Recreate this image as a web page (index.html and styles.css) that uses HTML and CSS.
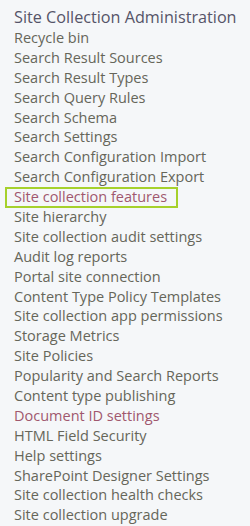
FILE: index.html
```html
<!DOCTYPE html>
<html lang="en">
<head>
    <meta charset="UTF-8">
    <title>Site Collection Administration</title>
    <link rel="stylesheet" href="styles.css">
</head>
<body>
    <div class="admin-section">
        <h3 class="section-title">Site Collection Administration</h3>
        <ul class="link-list">
            <li><a href="#">Recycle bin</a></li>
            <li><a href="#">Search Result Sources</a></li>
            <li><a href="#">Search Result Types</a></li>
            <li><a href="#">Search Query Rules</a></li>
            <li><a href="#">Search Schema</a></li>
            <li><a href="#">Search Settings</a></li>
            <li><a href="#">Search Configuration Import</a></li>
            <li><a href="#">Search Configuration Export</a></li>
            <li class="highlight"><a href="#" class="visited">Site collection features</a></li>
            <li><a href="#">Site hierarchy</a></li>
            <li><a href="#">Site collection audit settings</a></li>
            <li><a href="#">Audit log reports</a></li>
            <li><a href="#">Portal site connection</a></li>
            <li><a href="#">Content Type Policy Templates</a></li>
            <li><a href="#">Site collection app permissions</a></li>
            <li><a href="#">Storage Metrics</a></li>
            <li><a href="#">Site Policies</a></li>
            <li><a href="#">Popularity and Search Reports</a></li>
            <li><a href="#">Content type publishing</a></li>
            <li><a href="#" class="visited">Document ID settings</a></li>
            <li><a href="#">HTML Field Security</a></li>
            <li><a href="#">Help settings</a></li>
            <li><a href="#">SharePoint Designer Settings</a></li>
            <li><a href="#">Site collection health checks</a></li>
            <li><a href="#">Site collection upgrade</a></li>
        </ul>
    </div>
</body>
</html>
```

FILE: styles.css
```css
body {
    margin: 0;
    background: #f5f7f9;
    font-family: "Open Sans", "Noto Sans", sans-serif;
}

.admin-section {
    padding: 7px 0 0 14px;
}

.section-title {
    margin: 0 0 1px 0;
    font-size: 16.2px;
    font-weight: normal;
    color: #555468;
    line-height: 20px;
    white-space: nowrap;
}

.link-list {
    list-style: none;
    margin: 0;
    padding: 0;
}

.link-list li {
    line-height: 19.9px;
    height: 19.9px;
}

.link-list a {
    color: #66665a;
    text-decoration: none;
    font-size: 14.5px;
    white-space: nowrap;
}

.link-list a.visited {
    color: #a0586e;
}

.highlight {
    position: relative;
}

.highlight::before {
    content: "";
    position: absolute;
    left: -9px;
    top: 0;
    width: 169px;
    height: 17px;
    border: 2px solid #a6d12c;
}
```
